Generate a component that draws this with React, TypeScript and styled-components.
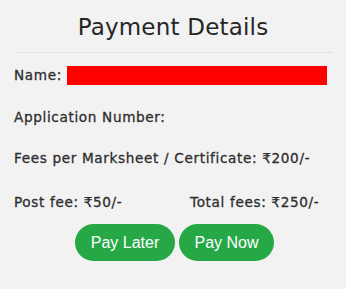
import React from "react";
import styled, { createGlobalStyle } from "styled-components";

const GlobalStyle = createGlobalStyle`
  html, body {
    margin: 0;
    padding: 0;
    background: #f2f2f3;
  }
`;

const Card = styled.div`
  width: 346px;
  height: 289px;
  box-sizing: border-box;
  padding: 11px 14px 0 14px;
  font-family: "DejaVu Sans", "Open Sans", sans-serif;
  color: #2e2e2e;
`;

const Title = styled.h2`
  margin: 0;
  text-align: center;
  font-family: "DejaVu Sans", sans-serif;
  font-weight: 400;
  font-size: 23px;
  line-height: 33px;
  color: #262626;
  letter-spacing: 0.2px;
`;

const Divider = styled.hr`
  margin: 8px 0 0 2px;
  width: 317px;
  border: none;
  border-top: 1px solid #e2e2e4;
`;

const Row = styled.div<{ $gap?: number }>`
  display: flex;
  align-items: center;
  margin-top: ${(p) => p.$gap ?? 22}px;
  height: 20px;
`;

const Label = styled.span<{ $width?: number }>`
  font-size: 13.6px;
  font-weight: 400;
  letter-spacing: 0.65px;
  -webkit-text-stroke: 0.3px #2e2e2e;
  white-space: nowrap;
  width: ${(p) => (p.$width ? `${p.$width}px` : "auto")};
`;

const Redacted = styled.div`
  flex: none;
  width: 260px;
  height: 19px;
  margin-left: auto;
  margin-right: 5px;
  background: #ff0000;
`;

const Actions = styled.div`
  display: flex;
  justify-content: center;
  gap: 4px;
  margin-top: 12px;
  padding-left: 3px;
`;

const PayButton = styled.button<{ $width: number }>`
  width: ${(p) => p.$width}px;
  height: 37px;
  border: none;
  border-radius: 19px;
  background: #27a847;
  color: #ffffff;
  font-family: "Liberation Sans", Arial, sans-serif;
  font-size: 16px;
  cursor: pointer;
`;

export default function App() {
  return (
    <>
      <GlobalStyle />
      <Card>
        <Title>Payment Details</Title>
        <Divider />
        <Row $gap={12}>
          <Label>Name:</Label>
          <Redacted />
        </Row>
        <Row>
          <Label>Application Number:</Label>
        </Row>
        <Row $gap={21}>
          <Label>Fees per Marksheet / Certificate: ₹200/-</Label>
        </Row>
        <Row $gap={24}>
          <Label $width={176}>Post fee: ₹50/-</Label>
          <Label>Total fees: ₹250/-</Label>
        </Row>
        <Actions>
          <PayButton $width={100}>Pay Later</PayButton>
          <PayButton $width={95}>Pay Now</PayButton>
        </Actions>
      </Card>
    </>
  );
}
